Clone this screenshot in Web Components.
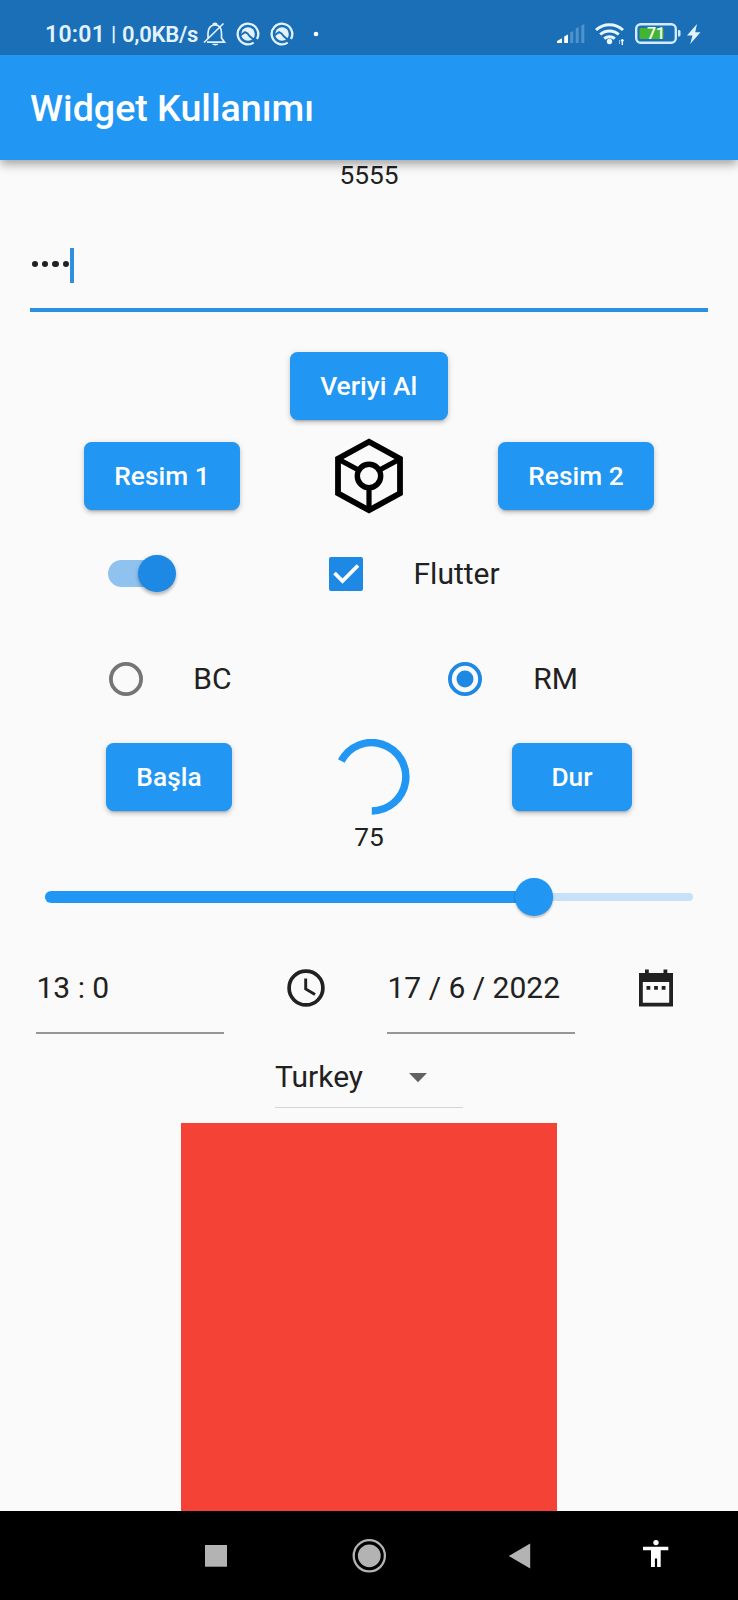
<!DOCTYPE html>
<html lang="tr">
<head>
<meta charset="utf-8">
<title>Widget Kullanımı</title>
<style>
html, body { margin: 0; padding: 0; }
body { width: 738px; height: 1600px; overflow: hidden; background: #fafafa; font-family: Roboto, "Noto Sans", sans-serif; color: #212121; }
</style>
</head>
<body>
<phone-screen></phone-screen>
<script>
const define = (name, markup) => {
  const template = document.createElement('template');
  template.innerHTML = markup;
  customElements.define(name, class extends HTMLElement {
    constructor() {
      super();
      this.attachShadow({ mode: 'open' }).appendChild(template.content.cloneNode(true));
    }
  });
};

define('ring-badge', `
<style>:host { display: block; width: 24px; height: 24px; } svg { display: block; }</style>
<svg width="24" height="24" viewBox="-12 -12 24 24"><path d="M5.700 8.600A10.300 10.300 0 1 1 9 5" fill="none" stroke="#e2f2ff" stroke-width="2.300"/><circle r="6.800" fill="#e2f2ff"/><path d="M-7.500 1.200-3-1.800-.5-.5 2 2.500 7 6.500" fill="none" stroke="#1a6fb7" stroke-width="1.900"/></svg>`);

define('status-bar', `
<style>
:host { display: flex; align-items: center; height: 55px; box-sizing: border-box; padding: 13px 37px 0 45px; background: #1a6fb7; color: #e2f2ff; justify-content: space-between; }
.left, .right { display: flex; align-items: center; height: 42px; }
.clock { font-size: 23px; font-weight: 600; letter-spacing: .25px; width: 66px; }
.bar { font-size: 21px; font-weight: 500; width: 11px; }
.speed { font-size: 22px; font-weight: 600; width: 81px; white-space: nowrap; letter-spacing: -.25px; }
svg { display: block; overflow: visible; }
.battery { display: grid; grid-template-rows: 22px; place-items: center; width: 46px; height: 22px; margin: 0 6px 0 10px; }
.battery > * { grid-area: 1 / 1; }
.battery span { font-size: 16px; line-height: 22px; font-weight: 500; color: #fff; margin-right: 4px; }
</style>
<div class="left">
  <span class="clock">10:01</span><span class="bar">|</span><span class="speed">0,0KB/s</span>
  <svg width="24" height="26" viewBox="0 0 24 26" fill="none" stroke="#e2f2ff" stroke-width="1.700">
    <path d="M5 18V12c0-5 3-8 7-8s6.500 3 6.500 8v5l3 4.200H4M10 3.600c.3-1.700 3.700-1.700 4 0M1 21.500 20.500 2.500"/><path d="M9 22.800h6.500c-.8 2.200-5.700 2.200-6.500 0z" fill="#e2f2ff" stroke="none"/>
  </svg>
  <ring-badge style="margin:0 0 1px 8.500px"></ring-badge>
  <ring-badge style="margin:0 0 1px 10.300px"></ring-badge>
  <svg style="margin-left:20px" width="5" height="5"><circle cx="2" cy="2" r="2.300" fill="#fff"/></svg>
</div>
<div class="right">
  <svg width="28" height="20" viewBox="0 0 28 20"><path d="M0 19v-2l5-2.800V19zM7.200 19v-6.500l3.800-2V19z" fill="#fff"/><path d="M13.200 19V8.500l3-1.500v12zM18.700 19V4.500l3-1.500v16zM24.300 19V1.500l3-1.500v19z" fill="#5093cb"/></svg>
  <svg style="margin-left:10px" width="30" height="24" viewBox="0 0 30 24" fill="none" stroke="#e8f6ff" stroke-width="3">
    <path d="M1 8a20 20 0 0 1 27 0M5.200 12.500a14 14 0 0 1 18.600 0M9.200 16.700a8 8 0 0 1 10.600 0"/><circle cx="14.500" cy="19.500" r="2.700" fill="#e8f6ff" stroke="none"/><path d="M24.500 22v-4" stroke-width="1" opacity=".6"/><path d="M27.300 17v6M25.800 18.500h3" stroke-width="1.500"/>
  </svg>
  <div class="battery">
    <svg width="46" height="22" viewBox="0 0 46 22"><rect x="1.200" y="1.200" width="39.600" height="18.600" rx="4.500" fill="none" stroke="#d4ebff" stroke-width="2.400"/><rect x="4.500" y="5" width="24" height="11" rx="1" fill="#43b52f"/><path d="M43 7h1q1.500 0 1.500 1.500v3.500q0 1.500-1.500 1.500H43z" fill="#d4ebff"/></svg>
    <span>71</span>
  </div>
  <svg width="14" height="20" viewBox="0 0 14 20"><path d="M10 0 0 11.500h5.500L3.200 20 13.500 8.300H8.200z" fill="#e2f2ff"/></svg>
</div>`);

define('app-bar', `
<style>
:host { display: flex; align-items: center; height: 105px; box-sizing: border-box; padding: 1px 30px 0; background: #2196f3; color: #fff; font-size: 37.600px; font-weight: 500; line-height: 44px; position: relative; z-index: 1;
  box-shadow: 0 4px 7.500px -2px rgba(0,0,0,.2), 0 7.500px 9px rgba(0,0,0,.12), 0 2px 12px rgba(0,0,0,.1); clip-path: inset(0 0 -30px 0); }
</style><slot></slot>`);

define('password-field', `
<style>
:host { display: block; margin: 0 30px; }
.value { display: flex; align-items: center; height: 36px; padding: 57px 0 25px 2px; }
i { width: 6.200px; height: 6.200px; border-radius: 50%; background: #212121; margin: 0 4px 1.500px 0; }
b { width: 4px; height: 35px; background: #2f8fde; margin-left: -2.500px; }
.line { height: 4px; background: #2b90e2; }
</style>
<div class="value"><i></i><i></i><i></i><i></i><b></b></div><div class="line"></div>`);

define('raised-button', `
<style>
:host { display: flex; align-items: center; justify-content: center; height: 67.500px; box-sizing: border-box; border-radius: 7.500px; background: #2196f3; color: #fff; font-size: 26.300px; font-weight: 500; letter-spacing: .05px; padding-bottom: 1px;
  box-shadow: 0 5px 2px -4px rgba(0,0,0,.2), 0 3px 4px rgba(0,0,0,.14), 0 1px 7px rgba(0,0,0,.1); }
</style><slot></slot>`);

define('cube-picture', `
<style>:host { display: block; width: 68px; height: 76px; } svg { display: block; filter: blur(.4px); }</style>
<svg width="68" height="76" viewBox="0 0 68 76" fill="none" stroke="#000" stroke-width="5.800"><path d="M34 3.700 65 20.700v34.600L34 72.300 3 55.300V20.700z" /><circle cx="34" cy="38" r="11.700" stroke-width="5.400"/><path d="M3 21 23.500 32M65 21 44.500 32M34 50v22" stroke-width="5.200"/></svg>`);

define('toggle-switch', `
<style>
:host { display: grid; align-items: center; width: 68px; height: 38px; }
i { grid-area: 1/1; width: 62px; height: 26.500px; border-radius: 14px; background: #90c2ef; }
b { grid-area: 1/1; justify-self: end; width: 37.600px; height: 37.600px; border-radius: 50%; background: #1e88e5; box-shadow: 0 3px 3px rgba(0,0,0,.18), 0 1px 5px rgba(0,0,0,.14); }
</style><i></i><b></b>`);

define('check-box', `
<style>:host { display: block; width: 34px; height: 34px; } svg { display: block; }</style>
<svg width="34" height="34"><rect width="34" height="34" rx="2" fill="#1e88e5"/><path d="m5.500 16 8 8L29 8.500" fill="none" stroke="#fff" stroke-width="3.800"/></svg>`);

define('radio-button', `
<style>
:host { display: block; width: 34px; height: 34px; --tone: #757575; --dot: none; }
:host([checked]) { --tone: #1e88e5; --dot: #1e88e5; }
svg { display: block; }
</style><svg width="34" height="34"><circle cx="17" cy="17" r="15.100" fill="none" style="stroke:var(--tone)" stroke-width="3.800"/><circle cx="17" cy="17" r="8.500" style="fill:var(--dot)"/></svg>`);

define('progress-ring', `
<style>:host { display: block; width: 76px; height: 76px; } svg { display: block; }</style>
<svg width="76" height="76"><path d="M7.300 22A34.200 34.200 0 1 1 37.800 72" fill="none" stroke="#2196f3" stroke-width="7.500"/></svg>`);

define('value-slider', `
<style>
:host { display: grid; align-items: center; height: 38px; }
i, em, b { grid-area: 1/1; }
em { height: 7.500px; border-radius: 4px; background: #c7e1f8; }
i { width: 489px; height: 11.300px; border-radius: 6px; background: #2196f3; }
b { width: 37.600px; height: 37.600px; border-radius: 50%; background: #2196f3; margin-left: 470px; box-shadow: 0 2px 2px rgba(0,0,0,.18), 0 1px 3px rgba(0,0,0,.1); }
</style><em></em><i></i><b></b>`);

define('line-field', `
<style>
:host { display: block; width: 188px; box-sizing: border-box; }
div { height: 88px; line-height: 84px; box-sizing: border-box; font-size: 30px; white-space: pre; padding-left: var(--inset, 0); border-bottom: 2px solid #969696; }
</style><div><slot></slot></div>`);

define('clock-icon', `
<style>:host { display: block; width: 38px; height: 38px; } svg { display: block; }</style>
<svg width="38" height="38" fill="none" stroke="#212121"><circle cx="19" cy="19" r="16.900" stroke-width="3.700"/><path d="M18.700 9.600v10.400l9.300 5.600" stroke-width="2.900"/></svg>`);

define('calendar-icon', `
<style>:host { display: block; width: 34px; height: 38px; } svg { display: block; }</style>
<svg width="34" height="38"><path fill="#212121" fill-rule="evenodd" d="M0 4h6V.5h3.800V4h14.700V.5h3.800V4H34v33.500H0zM3.800 13v20.700h26.400V13zM7.500 17h3.800v3.800H7.500zM15.100 17h3.800v3.800h-3.800zM22.700 17h3.800v3.800h-3.800z"/></svg>`);

define('drop-down', `
<style>
:host { display: flex; align-items: center; width: 188px; height: 62.500px; box-sizing: border-box; border-bottom: 1.500px solid #d5d5d5; font-size: 30px; padding-top: 2px; }
svg { margin: 3px 36px 0 auto; }
</style><slot></slot><svg width="18" height="10"><path d="M0 0h18L9 9.300z" fill="#616161"/></svg>`);

define('navigation-bar', `
<style>
:host { display: block; height: 89px; background: #000; }
svg { display: block; }
</style>
<svg width="738" height="89" viewBox="0 1511 738 89">
<rect x="205" y="1545" width="22" height="21.700" fill="#b3b3b3"/>
<circle cx="369.300" cy="1555.800" r="11.400" fill="#b3b3b3"/><circle cx="369.300" cy="1555.800" r="15.600" fill="none" stroke="#b3b3b3" stroke-width="2.300"/>
<path d="M508.800 1556 530.200 1543.500v25z" fill="#b3b3b3"/>
<g fill="#fff"><circle cx="656" cy="1542.600" r="2.700"/><path d="M643 1546.700h25.300v3.600h-7.600v16.700h-3.600V1558.500h-2.200v8.500H651v-16.700h-8z"/></g>
</svg>`);

define('phone-screen', `
<style>
:host { display: flex; flex-direction: column; width: 738px; height: 1600px; background: #fafafa; }
main { flex: 1; min-height: 0; overflow: hidden; display: flex; flex-direction: column; }
.caption { text-align: center; font-size: 26.300px; height: 30px; line-height: 30px; flex: none; }
.row { display: flex; align-items: center; flex: none; }
.label { font-size: 30px; line-height: 40px; }
.red { width: 376px; flex: 1; background: #f44336; margin: 15px auto 0 181px; }
</style>
<status-bar></status-bar>
<app-bar>Widget Kullanımı</app-bar>
<main>
  <div class="caption">5555</div>
  <password-field></password-field>
  <div class="row" style="height:68px;margin-top:40px;padding-left:290px"><raised-button style="width:157.500px">Veriyi Al</raised-button></div>
  <div class="row" style="height:90px;margin-top:11px;padding-left:84px"><raised-button style="width:156px">Resim 1</raised-button><cube-picture style="margin-left:95px"></cube-picture><raised-button style="width:156px;margin-left:95px">Resim 2</raised-button></div>
  <div class="row" style="height:90px;margin-top:7.500px;padding-left:108px"><toggle-switch></toggle-switch><check-box style="margin-left:153px"></check-box><span class="label" style="margin-left:50.500px">Flutter</span></div>
  <div class="row" style="height:90px;margin-top:15.500px;padding-left:108.700px"><radio-button></radio-button><span class="label" style="margin-left:50.500px;width:255px">BC</span><radio-button checked></radio-button><span class="label" style="margin-left:51px">RM</span></div>
  <div class="row" style="height:76px;margin-top:15px;padding-left:106px"><raised-button style="width:126px">Başla</raised-button><progress-ring style="margin-left:102px"></progress-ring><raised-button style="width:120px;margin-left:102px">Dur</raised-button></div>
  <div class="caption" style="margin-top:6.500px">75</div>
  <value-slider style="margin:26.500px 45px 0;flex:none"></value-slider>
  <div class="row" style="margin-top:29.500px;padding-left:36px;height:88px"><line-field style="--inset:.5px">13 : 0</line-field><clock-icon style="margin:0 0 3px 63px"></clock-icon><line-field style="margin-left:62px;--inset:.5px">17 / 6 / 2022</line-field><calendar-icon style="margin:0 0 4px 64px"></calendar-icon></div>
  <div class="row" style="margin-top:11.500px;padding-left:275px"><drop-down>Turkey</drop-down></div>
  <div class="red"></div>
</main>
<navigation-bar></navigation-bar>`);
</script>
</body>
</html>
